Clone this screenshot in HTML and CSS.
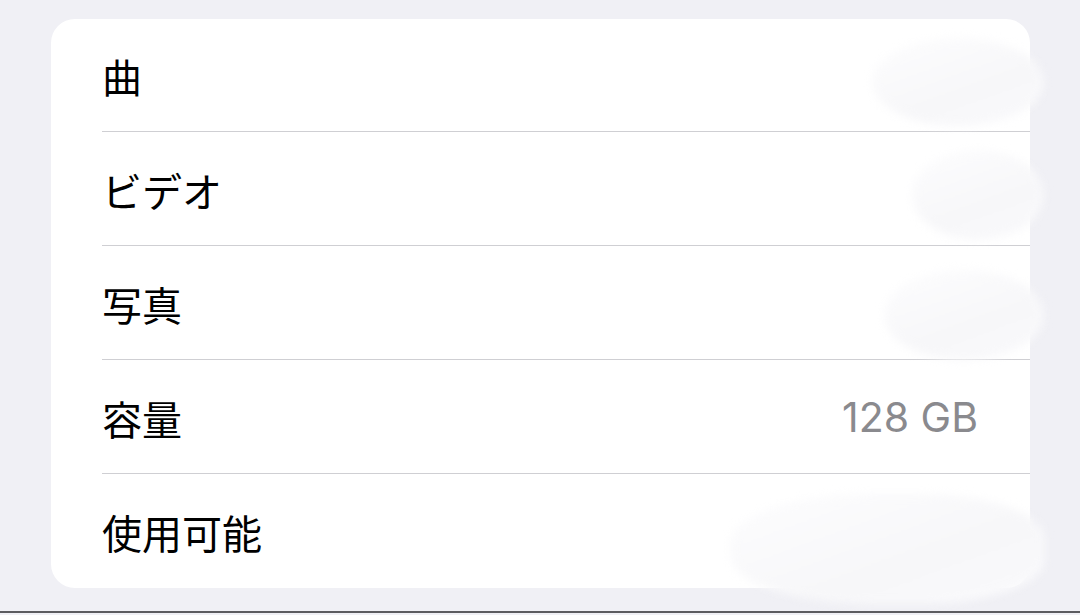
FILE: index.html
```html
<!DOCTYPE html>
<html lang="ja">
<head>
<meta charset="utf-8">
<link rel="stylesheet" href="styles.css">
</head>
<body>
<div class="page">
  <div class="card">
    <div class="row"><span class="label">曲</span></div>
    <div class="row"><span class="label">ビデオ</span></div>
    <div class="row"><span class="label">写真</span></div>
    <div class="row"><span class="label">容量</span><span class="value">128 GB</span></div>
    <div class="row last"><span class="label">使用可能</span></div>
  </div>
  <div class="smudge s1"></div>
  <div class="smudge s2"></div>
  <div class="smudge s3"></div>
  <div class="smudge s5"></div>
</div>
</body>
</html>
```
FILE: styles.css
```css
html, body {
  margin: 0;
  padding: 0;
}
body {
  background: #f0f0f5;
  font-family: "Noto Sans CJK JP", "Noto Sans", sans-serif;
}
.page {
  position: relative;
  height: 613px;
  border-bottom: 2px solid #5c5c60;
  overflow: hidden;
  padding-top: 19px;
  box-sizing: border-box;
}
.card {
  margin-left: 51px;
  width: 979px;
  background: #ffffff;
  border-radius: 24px;
  overflow: hidden;
}
.row {
  height: 114px;
  margin-left: 51px;
  padding-right: 52px;
  box-sizing: border-box;
  display: flex;
  align-items: center;
  justify-content: space-between;
  border-bottom: 1px solid #cfcfd3;
}
.row:first-child {
  height: 113px;
}
.row.last {
  border-bottom: none;
}
.label {
  font-size: 40px;
  color: #000;
  line-height: 1;
  padding-top: 2px;
}
.value {
  font-family: "Inter", "Liberation Sans", sans-serif;
  font-size: 41px;
  color: #8a8a8e;
  line-height: 1;
  padding-top: 2px;
}
.smudge {
  position: absolute;
  border-radius: 50%;
  background: linear-gradient(160deg, #fdfdfe 0%, #f7f7f9 60%, #fafafc 100%);
  filter: blur(4px);
}
.s1 { left: 872px; top: 38px; width: 172px; height: 88px; }
.s2 { left: 912px; top: 150px; width: 132px; height: 90px; }
.s3 { left: 884px; top: 270px; width: 160px; height: 90px; }
.s5 { left: 730px; top: 494px; width: 315px; height: 110px; border-radius: 45% 40% 40% 45%; }
```
